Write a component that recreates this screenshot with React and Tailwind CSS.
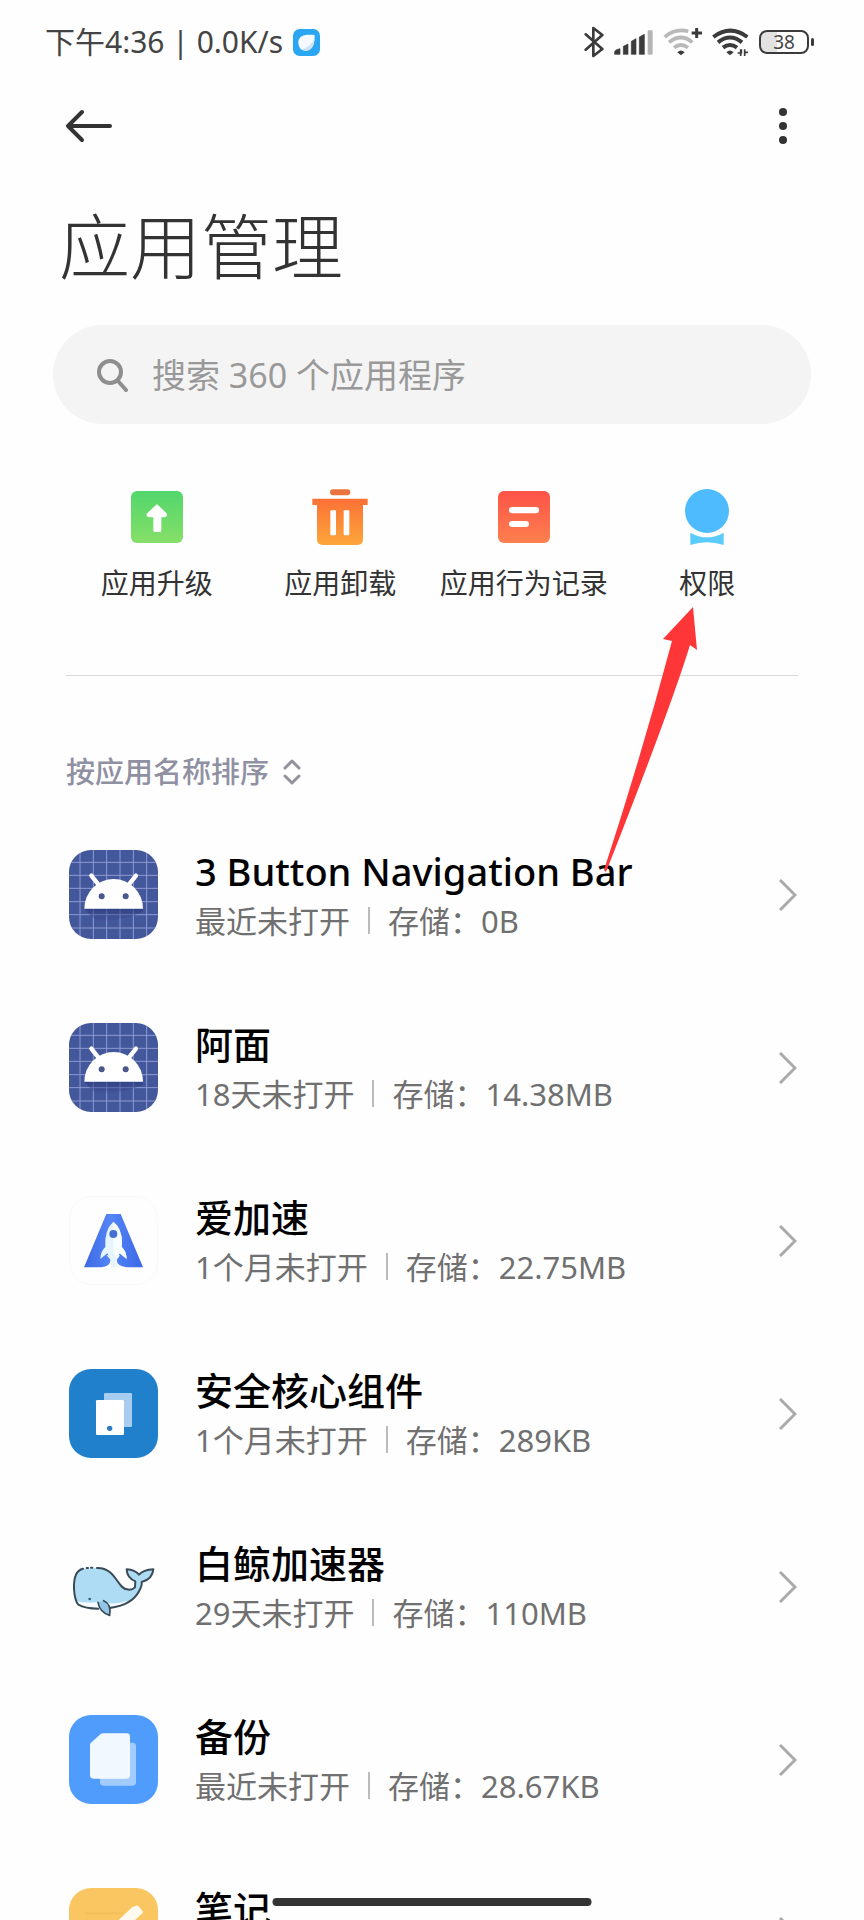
import { useState } from 'react'

const ACCIONES = [
  { id: 'upgrade', nombre: '应用升级', Icono: IconoSubir },
  { id: 'uninstall', nombre: '应用卸载', Icono: IconoPapelera },
  { id: 'records', nombre: '应用行为记录', Icono: IconoRegistro },
  { id: 'permissions', nombre: '权限', Icono: IconoPermisos },
]

const APPS = [
  { nombre: '3 Button Navigation Bar', uso: '最近未打开', peso: '0B', Icono: IconoAndroid },
  { nombre: '阿面', uso: '18天未打开', peso: '14.38MB', Icono: IconoAndroid },
  { nombre: '爱加速', uso: '1个月未打开', peso: '22.75MB', Icono: IconoCohete },
  { nombre: '安全核心组件', uso: '1个月未打开', peso: '289KB', Icono: IconoSeguridad },
  { nombre: '白鲸加速器', uso: '29天未打开', peso: '110MB', Icono: IconoBallena },
  { nombre: '备份', uso: '最近未打开', peso: '28.67KB', Icono: IconoRespaldo },
  { nombre: '笔记', uso: null, peso: null, Icono: IconoNotas },
]

function IconoSubir() {
  return (
    <svg viewBox="0 0 168 168" className="size-14" aria-hidden="true">
      <defs>
        <linearGradient id="verde" x1="0" y1="0" x2="0" y2="1">
          <stop offset="0" stopColor="#52d76c" />
          <stop offset="1" stopColor="#86df68" />
        </linearGradient>
      </defs>
      <rect x="6" y="6" width="156" height="156" rx="18" fill="url(#verde)" />
      <path d="M84 48 111 74q4 8-5 9H95v41q0 3-3 3H78q-3 0-3-3V83H61q-9-1-5-9Z" fill="#fff" stroke="#fff" strokeWidth="4" strokeLinejoin="round" />
    </svg>
  )
}

function IconoPapelera() {
  return (
    <svg viewBox="0 0 168 168" className="size-14" aria-hidden="true">
      <defs>
        <linearGradient id="naranja" x1="0" y1="0" x2="0" y2="1">
          <stop offset="0" stopColor="#fb7135" />
          <stop offset="1" stopColor="#fda63b" />
        </linearGradient>
      </defs>
      <rect x="54" y="1" width="61" height="18" rx="9" fill="#ea7440" />
      <path d="M1 29h166v19h-14v103q0 17-17 17H32q-17 0-17-17V48H1Z" fill="url(#naranja)" />
      <rect x="55" y="64" width="17" height="75" rx="3" fill="#fff" />
      <rect x="95" y="64" width="17" height="75" rx="3" fill="#fff" />
    </svg>
  )
}

function IconoRegistro() {
  return (
    <svg viewBox="0 0 168 168" className="size-14" aria-hidden="true">
      <defs>
        <linearGradient id="rojo" x1="0" y1="0" x2="0" y2="1">
          <stop offset="0" stopColor="#fd5348" />
          <stop offset="1" stopColor="#fd804e" />
        </linearGradient>
      </defs>
      <rect x="6" y="6" width="156" height="156" rx="18" fill="url(#rojo)" />
      <rect x="39" y="54" width="90" height="19" rx="9" fill="#fff" />
      <rect x="39" y="96" width="60" height="18" rx="9" fill="#fff" />
    </svg>
  )
}

function IconoPermisos() {
  return (
    <svg viewBox="0 0 168 168" className="size-14" aria-hidden="true">
      <circle cx="84" cy="66" r="66" fill="#4dbbfd" />
      <path d="M34 131q50 28 100 0v37q-50-17-100 0Z" fill="#5bcbfc" />
    </svg>
  )
}

function IconoAndroid() {
  return (
    <svg viewBox="0 0 267 267" className="size-full bg-[#43579b]" aria-hidden="true">
      <defs>
        <linearGradient id="sombra" x1="0" y1="0" x2="0" y2="1">
          <stop offset="0" stopColor="#2b3c7c" stopOpacity="0.7" />
          <stop offset="1" stopColor="#2b3c7c" stopOpacity="0" />
        </linearGradient>
      </defs>
      <path
        d="M33 0v267M73 0v267M113 0v267M153 0v267M193 0v267M233 0v267M0 37h267M0 76h267M0 115h267M0 155h267M0 194h267M0 234h267"
        stroke="#8e9bd3"
        strokeWidth="3"
      />
      <path d="M46 176h176v10q-60 25-140 30Z" fill="url(#sombra)" />
      <path d="m67 77 21 26M201 77l-21 26" stroke="#fff" strokeWidth="13" strokeLinecap="round" />
      <path d="M46 176a88 89 0 0 1 176 0Z" fill="#fff" />
      <circle cx="98" cy="139" r="9" fill="#4b568a" />
      <circle cx="170" cy="139" r="9" fill="#4b568a" />
    </svg>
  )
}

function IconoCohete() {
  return (
    <svg viewBox="0 0 267 267" className="size-full bg-[#fefefe]" aria-hidden="true">
      <defs>
        <linearGradient id="azul" x1="0" y1="0" x2="1" y2="0">
          <stop offset="0" stopColor="#3b69e4" />
          <stop offset="0.45" stopColor="#5585f6" />
          <stop offset="1" stopColor="#3a68e6" />
        </linearGradient>
      </defs>
      <rect x="2" y="2" width="263" height="263" rx="62" fill="none" stroke="#f7f7f7" strokeWidth="3" />
      <path d="M112 54h43l67 160h-50q-28-4-29-22l10-14h-40l12 14q-2 20-28 22H45Z" fill="url(#azul)" />
      <path d="M133 77q25 20 26 61l-1 15q14 12 15 36l-21-17-9 16v26h-18v-26l-10-16-21 17q1-24 15-36-4-50 24-76Z" fill="#e6f5fd" />
      <path d="M133 77q25 20 26 61l-1 15q14 12 15 36l-21-17-9 16-10-18Z" fill="#f8fdff" />
      <circle cx="133" cy="114" r="12" fill="#466ed0" />
    </svg>
  )
}

function IconoSeguridad() {
  return (
    <svg viewBox="0 0 267 267" className="size-full bg-[#2180cc]" aria-hidden="true">
      <rect x="105" y="72" width="84" height="102" rx="4" fill="#a6cdf0" />
      <rect x="81" y="93" width="84" height="105" rx="4" fill="#fff" />
      <circle cx="122" cy="178" r="8" fill="#2b7cc0" />
    </svg>
  )
}

function IconoBallena() {
  return (
    <svg viewBox="0 0 267 267" className="size-full bg-[#fefefe]" aria-hidden="true">
      <path
        d="M44 80C20 85 14 112 15 140q2 35 13 48 20 12 62 12l30-2q70-8 90-50 10-18 8-28 32-8 35-38-30 2-43 16-12-14-37-16 1 26 26 36l-1 18q-10 10-24 6C145 140 140 76 84 78Z"
        fill="#aedcf5"
      />
      <path d="M22 178q30 6 64 2 50 10 90-4-25 20-60 23-50 4-85-9Z" fill="#f4fafd" />
      <path
        d="M42 80C20 85 14 112 15 140q2 35 13 48 20 12 60 12M122 198q66-8 88-50 10-18 8-28 32-8 35-38-30 2-43 16-12-14-37-16 1 26 26 36l-1 18q-10 10-24 6C145 140 140 76 84 78M53 78h4M66 77h4"
        fill="none"
        stroke="#3a4b57"
        strokeWidth="6"
        strokeLinecap="round"
        strokeLinejoin="round"
      />
      <path d="M87 181q5 30 35 39 6-34-18-44" fill="#93c6e6" stroke="#3a4b57" strokeWidth="5" strokeLinecap="round" strokeLinejoin="round" />
      <circle cx="62" cy="171" r="4" fill="#3a5a70" />
    </svg>
  )
}

function IconoRespaldo() {
  return (
    <svg viewBox="0 0 267 267" className="size-full bg-[#4f9cfd]" aria-hidden="true">
      <rect x="93" y="83" width="108" height="129" rx="10" fill="#a2ccfe" />
      <path d="M103 55h70q10 0 10 10v116q0 10-10 10H73q-10 0-10-10V90q0-4 3-7l28-25q4-3 9-3Z" fill="#f2f8ff" />
    </svg>
  )
}

function IconoNotas() {
  return (
    <svg viewBox="0 0 267 267" className="size-full bg-[#f9c661]" aria-hidden="true">
      <path d="M50 76h110M50 130h60" stroke="#f2bf5b" strokeWidth="6" strokeLinecap="round" />
      <path d="m190 57 12-4q4-1 7 2l11 13q3 4 0 8L140 150l-30 8 8-32Z" fill="#fffaf0" />
    </svg>
  )
}

function BarraEstado() {
  return (
    <div className="flex h-[84px] shrink-0 items-center justify-between pl-[45px] pr-[50px] text-[#444]">
      <div className="flex items-center gap-2.5">
        <span className="text-[30px] leading-10">下午4:36 | 0.0K/s</span>
        <svg viewBox="0 0 81 81" className="size-[27px]" aria-hidden="true">
          <rect width="81" height="81" rx="20" fill="#2ba6f3" />
          <path d="M16 42q0-24 26-25h20q4 0 3 5-1 42-26 43-22 0-23-23Z" fill="#f4faff" />
          <path d="M65 28q-2 37-26 37-8 0-13-4 26-6 39-33Z" fill="#cfe4f7" />
        </svg>
      </div>
      <div className="flex items-center gap-2.5">
        <svg viewBox="0 0 60 96" className="h-8 w-5" fill="none" stroke="#3b3b3b" strokeWidth="8" strokeLinejoin="round" strokeLinecap="round" aria-hidden="true">
          <path d="m5 25 50 44-27 21V6l27 21L5 71" />
        </svg>
        <svg viewBox="0 0 117 75" className="h-[25px] w-[39px]" aria-hidden="true">
          <path d="M2 73V64l6-5 10-3v17ZM28 73V49l14-7v31ZM52 73V34l14-8v47ZM76 73V21l15-8v60Z" fill="#3b3b3b" stroke="#3b3b3b" strokeWidth="2" strokeLinejoin="round" />
          <rect x="101" y="1" width="15" height="73" rx="4" fill="#b5b5b5" />
        </svg>
        <svg viewBox="0 0 117 84" className="h-7 w-[39px]" fill="none" aria-hidden="true">
          <path d="M5 27Q36 0 76 10M18 43q36-29 70 0M33 59q21-16 42 0" stroke="#b9b9b9" strokeWidth="11" />
          <path d="M43 73q11-11 22 0L54 82Z" fill="#3b3b3b" />
          <path d="M86 15h31M101 0v30" stroke="#3b3b3b" strokeWidth="9" />
        </svg>
        <svg viewBox="0 0 111 84" className="h-7 w-[37px]" fill="none" aria-hidden="true">
          <path d="M4 27q51-38 102 0M18 43q36-29 72 0M33 59q21-16 42 0" stroke="#3b3b3b" strokeWidth="12" />
          <path d="M43 73q11-11 22 0L54 82Z" fill="#3b3b3b" />
          <path d="M77 75h11V64M86 84V64M98 64v20M98 73h10" stroke="#3b3b3b" strokeWidth="5" />
        </svg>
        <div className="flex items-center gap-0.5">
          <div className="flex h-6 w-[50px] items-center justify-center rounded-lg border-2 border-[#3b3b3b] bg-linear-to-r from-[#e2e2e2] from-35% to-white to-35% text-[19px] leading-none">
            38
          </div>
          <div className="h-2 w-[3px] rounded-sm bg-[#3b3b3b]" />
        </div>
      </div>
    </div>
  )
}

function FilaApp({ app }) {
  const { nombre, uso, peso, Icono } = app
  return (
    <li>
      <button type="button" className="flex h-[173px] w-full items-center pl-[69px] pr-[67px] text-left">
        <span className="size-[89px] shrink-0 overflow-hidden rounded-[22px]">
          <Icono />
        </span>
        <span className="ml-[37px] flex min-w-0 flex-1 flex-col">
          <span className="text-[38px] font-medium leading-[52px] text-black">{nombre}</span>
          <span className="flex h-12 items-center text-[31px] leading-[48px] text-[#707070]">
            {uso && (
              <>
                <span>{uso}</span>
                <span className="mx-[18px] h-[27px] w-0.5 bg-[#bbb]" />
                <span>存储：{peso}</span>
              </>
            )}
          </span>
        </span>
        <svg viewBox="0 0 18 32" className="h-8 w-[18px]" fill="none" stroke="#aaa" strokeWidth="3" aria-hidden="true">
          <path d="m1 1 15 15L1 31" />
        </svg>
      </button>
    </li>
  )
}

export default function App() {
  const [busqueda, setBusqueda] = useState('')

  const lista = APPS.filter((a) => a.nombre.toLowerCase().includes(busqueda.toLowerCase()))

  return (
    <div className="relative flex h-screen flex-col overflow-hidden bg-[#fefefe] font-['Noto_Sans','Noto_Sans_CJK_SC',sans-serif]">
      <BarraEstado />

      <main className="relative flex-1 overflow-y-auto [scrollbar-width:none]">
        <header className="flex h-[84px] items-center justify-between pl-[65px] pr-[76px]">
          <button type="button" aria-label="返回">
            <svg viewBox="0 0 48 34" className="h-[34px] w-12" fill="none" stroke="#333" strokeWidth="4" strokeLinecap="round" strokeLinejoin="round" aria-hidden="true">
              <path d="M17 3 3 17l14 14M3 17h42" />
            </svg>
          </button>
          <button type="button" aria-label="更多">
            <svg viewBox="0 0 10 38" className="h-[38px] w-2.5" fill="#333" aria-hidden="true">
              <circle cx="5" cy="5" r="4" />
              <circle cx="5" cy="19" r="4" />
              <circle cx="5" cy="33" r="4" />
            </svg>
          </button>
        </header>

        <h1 className="mt-[42px] px-[59px] text-[71px] font-light leading-[72px] text-[#333]">应用管理</h1>

        <label className="mx-[53px] mt-[43px] flex h-[99px] items-center gap-6 rounded-full bg-[#f4f4f4] pl-[43px] pr-10">
          <svg viewBox="0 0 32 34" className="h-[34px] w-8 shrink-0" fill="none" stroke="#8e8e8e" strokeWidth="4" strokeLinecap="round" aria-hidden="true">
            <circle cx="14" cy="14" r="11" />
            <path d="m22 23 8 9" />
          </svg>
          <input
            type="text"
            value={busqueda}
            onChange={(e) => setBusqueda(e.target.value)}
            placeholder="搜索 360 个应用程序"
            aria-label="搜索应用程序"
            className="min-w-0 flex-1 bg-transparent text-[34px] leading-[48px] text-[#333] outline-none placeholder:text-[#999]"
          />
        </label>

        <nav className="mt-[65px] grid grid-cols-4 px-[65px]">
          {ACCIONES.map(({ id, nombre, Icono }) => (
            <button key={id} type="button" className="flex flex-col items-center gap-[18px]">
              <Icono />
              <span className="whitespace-nowrap text-[28px] leading-10 text-[#333]">{nombre}</span>
            </button>
          ))}
        </nav>

        <hr className="mx-[66px] mt-[72px] border-[#d9d9d9]" />

        <button type="button" className="ml-[66px] mt-[76px] flex items-center gap-3.5 text-[29px] font-medium leading-10 text-[#9090a3]">
          按应用名称排序
          <svg viewBox="0 0 18 26" className="h-[26px] w-[18px]" fill="none" stroke="#92929c" strokeWidth="3" strokeLinecap="round" strokeLinejoin="round" aria-hidden="true">
            <path d="m2 9 7-7 7 7M2 17l7 7 7-7" />
          </svg>
        </button>

        <ul className="mt-4">
          {lista.map((app) => (
            <FilaApp key={app.nombre} app={app} />
          ))}
        </ul>

        {/* flecha que señala 权限 */}
        <svg viewBox="0 0 34 266" className="pointer-events-none absolute right-[167px] top-[523px] h-[266px] w-[34px] overflow-visible" aria-hidden="true">
          <path d="M30 0 34 43 27 38Q8 100 -57 265L-59 263Q-22 150 9 34L0 32Z" fill="#fe3637" />
        </svg>
      </main>

      <div className="absolute bottom-[14px] left-1/2 h-2 w-[319px] -translate-x-1/2 rounded-full bg-[#333]" />
    </div>
  )
}
